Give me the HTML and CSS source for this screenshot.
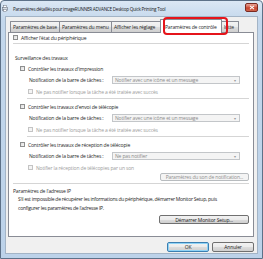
FILE: index.html
```html
<!DOCTYPE html>
<html lang="fr">
<head>
    <meta charset="UTF-8">
    <title>Paramètres détaillés</title>
    <link rel="stylesheet" href="styles.css">
</head>
<body>
    <div class="window">
        <div class="titlebar">
            <svg class="app-icon" viewBox="0 0 6 7">
                <rect x="0.5" y="2.5" width="5" height="3" fill="#d8dde3" stroke="#6b7380" stroke-width="0.6"/>
                <rect x="1.5" y="0.5" width="3" height="2" fill="#fff" stroke="#6b7380" stroke-width="0.5"/>
                <rect x="1.5" y="4.5" width="3" height="2" fill="#fff" stroke="#6b7380" stroke-width="0.5"/>
            </svg>
            <div class="title-text">Paramètres détaillés pour imageRUNNER ADVANCE Desktop Quick Printing Tool</div>
            <div class="close-btn">
                <svg viewBox="0 0 6 5"><path d="M1 0.8 L5 4.2 M5 0.8 L1 4.2" stroke="#fff" stroke-width="1.1"/></svg>
            </div>
        </div>
        <div class="client">
            <div class="tabs">
                <div class="tab">Paramètres de base</div>
                <div class="tab">Paramètres du menu</div>
                <div class="tab">Afficher les réglage</div>
                <div class="tab selected">Paramètres de contrôle</div>
                <div class="tab last">lutte</div>
                <div class="highlight"></div>
            </div>
            <div class="panel">
                <div class="row top-row"><span class="check"></span>Afficher l'état du périphérique</div>
                <div class="rule wide"></div>
                <div class="row section-title">Surveillance des travaux</div>

                <div class="group">
                    <div class="row job-row"><span class="check"></span>Contrôler les travaux d'impression</div>
                    <div class="notif-row">
                        <span class="notif-label">Notification de la barre de tâches :</span>
                        <div class="combo">Notifier avec une icône et un message<span class="combo-arrow">▾</span></div>
                    </div>
                    <div class="row sub-row disabled"><span class="check"></span>Ne pas notifier lorsque la tâche a été traitée avec succès</div>
                    <div class="rule"></div>

                    <div class="row job-row"><span class="check"></span>Contrôler les travaux d'envoi de télécopie</div>
                    <div class="notif-row">
                        <span class="notif-label">Notification de la barre de tâches :</span>
                        <div class="combo">Notifier avec une icône et un message<span class="combo-arrow">▾</span></div>
                    </div>
                    <div class="row sub-row disabled"><span class="check"></span>Ne pas notifier lorsque la tâche a été traitée avec succès</div>
                    <div class="rule"></div>

                    <div class="row job-row"><span class="check"></span>Contrôler les travaux de réception de télécopie</div>
                    <div class="notif-row">
                        <span class="notif-label">Notification de la barre de tâches :</span>
                        <div class="combo">Ne pas notifier<span class="combo-arrow">▾</span></div>
                    </div>
                    <div class="row sub-row disabled"><span class="check"></span>Notifier la réception de télécopies par un son</div>
                    <div class="btn-row first-btn">
                        <div class="btn disabled-btn">Paramètres du son de notification...</div>
                    </div>
                </div>

                <div class="rule wide last-rule"></div>
                <div class="row ip-title">Paramètres de l'adresse IP</div>
                <div class="ip-text">S'il est impossible de récupérer les informations du périphérique, démarrer Monitor Setup, puis<br>configurer les paramètres de l'adresse IP.</div>
                <div class="btn-row setup-btn-row">
                    <div class="btn setup-btn">Démarrer Monitor Setup...</div>
                </div>
            </div>
            <div class="dialog-buttons">
                <div class="btn ok-btn">OK</div>
                <div class="btn cancel-btn">Annuler</div>
            </div>
        </div>
    </div>
</body>
</html>
```

FILE: styles.css
```css
html, body {
    margin: 0;
    padding: 0;
    background: #ffffff;
}
body {
    font-family: "Open Sans", "Noto Sans", sans-serif;
    font-size: 5px;
    letter-spacing: -0.15px;
    color: #1e1e1e;
}
.window {
    width: 263px;
    height: 259px;
    box-sizing: border-box;
    border: 1px solid #5d7188;
    border-radius: 4px 4px 0 0;
    background: linear-gradient(#dbe7f4, #c3d7ec 20px, #bcd2e9);
    display: flex;
    flex-direction: column;
}
.titlebar {
    height: 15px;
    display: flex;
    align-items: center;
    padding-left: 1px;
}
.app-icon {
    width: 6px;
    height: 7px;
    margin-right: 5px;
}
.title-text {
    flex-grow: 1;
    font-size: 4.6px;
    letter-spacing: -0.25px;
    color: #1b1b1b;
    white-space: nowrap;
}
.close-btn {
    width: 13px;
    height: 9px;
    margin-right: 4px;
    margin-bottom: 2px;
    box-sizing: border-box;
    border: 1px solid #7a2a22;
    border-radius: 2px;
    background: linear-gradient(#e8a193, #d2614f 45%, #c7412b 55%, #d0664f);
    display: flex;
    justify-content: center;
    align-items: center;
}
.close-btn svg {
    width: 6px;
    height: 5px;
}
.client {
    flex-grow: 1;
    margin: 0 4px 4px 4px;
    background: #f0f0f0;
    border: 1px solid #a3b4c6;
    padding: 2px 3px 0 2px;
    display: flex;
    flex-direction: column;
}
.tabs {
    display: flex;
    align-items: flex-end;
    height: 13px;
    padding-left: 2px;
    position: relative;
    z-index: 1;
}
.tab {
    height: 11px;
    box-sizing: border-box;
    border: 1px solid #898c95;
    border-bottom: none;
    margin-right: -1px;
    background: linear-gradient(#f3f3f3, #ebebeb 50%, #dddddd 51%, #cfcfcf);
    padding: 0 2px;
    display: flex;
    align-items: center;
    white-space: nowrap;
    overflow: hidden;
    border-radius: 1px 1px 0 0;
}
.tab:nth-child(1) { width: 50px; }
.tab:nth-child(2) { width: 53px; }
.tab:nth-child(3) { width: 51px; }
.tab.selected {
    width: 62px;
    height: 14px;
    margin-bottom: -1px;
    background: #ffffff;
    padding-left: 4px;
    margin-left: -1px;
    margin-right: -2px;
    position: relative;
}
.tab.last {
    width: 19px;
    padding-left: 3px;
}
.highlight {
    position: absolute;
    left: 155px;
    top: -2px;
    width: 61px;
    height: 14px;
    border: 2px solid #e5141b;
    border-radius: 4px;
}
.panel {
    height: 205px;
    box-sizing: border-box;
    background: #ffffff;
    border: 1px solid #898c95;
    padding: 0 4px 0 4px;
    display: flex;
    flex-direction: column;
}
.row {
    display: flex;
    align-items: center;
    height: 7px;
    white-space: nowrap;
}
.check {
    width: 5px;
    height: 5px;
    box-sizing: border-box;
    border: 1px solid #8e8f8f;
    background: linear-gradient(135deg, #dcdcdc, #f6f6f6);
    margin-right: 3px;
    flex-shrink: 0;
}
.top-row {
    margin-top: 1px;
}
.rule {
    height: 1px;
    background: #d5d5d5;
    margin-top: 3px;
    margin-left: 7px;
}
.rule.wide {
    margin-left: 0;
    margin-top: 2px;
}
.section-title {
    margin-top: 10px;
    margin-left: 2px;
}
.group {
    display: flex;
    flex-direction: column;
    padding-left: 7px;
}
.job-row {
    margin-top: 4px;
}
.notif-row {
    display: flex;
    align-items: center;
    height: 8px;
    margin-top: 4px;
    padding-left: 9px;
    white-space: nowrap;
}
.notif-label {
    width: 83px;
    flex-shrink: 0;
}
.combo {
    width: 128px;
    height: 8px;
    box-sizing: border-box;
    border: 1px solid #c3c6c9;
    background: #f4f4f4;
    color: #8a8a8a;
    padding-left: 2px;
    display: flex;
    align-items: center;
}
.combo-arrow {
    margin-left: auto;
    margin-right: 3px;
    font-size: 4px;
    color: #9a9a9a;
}
.sub-row {
    margin-top: 4px;
    padding-left: 8px;
}
.disabled {
    color: #9c9c9c;
}
.disabled .check {
    border-color: #c4c4c4;
    background: #f4f4f4;
}
.btn-row {
    display: flex;
    justify-content: flex-end;
}
.first-btn {
    margin-top: 2px;
}
.btn {
    height: 9px;
    box-sizing: border-box;
    border: 1px solid #707070;
    border-radius: 2px;
    background: linear-gradient(#f2f2f2, #ebebeb 50%, #dddddd 51%, #cfcfcf);
    display: flex;
    align-items: center;
    justify-content: center;
    white-space: nowrap;
}
.disabled-btn {
    width: 89px;
    height: 8px;
    border-color: #b8bcbf;
    background: #f4f4f4;
    color: #8f8f8f;
}
.last-rule {
    margin-top: 6px;
}
.ip-title {
    margin-top: 3px;
}
.ip-text {
    margin-top: 1px;
    padding-left: 5px;
    line-height: 9px;
    white-space: nowrap;
    letter-spacing: -0.25px;
}
.setup-btn-row {
    margin-top: 2px;
}
.setup-btn {
    width: 90px;
}
.dialog-buttons {
    display: flex;
    justify-content: flex-end;
    gap: 3px;
    margin-top: 5px;
}
.ok-btn, .cancel-btn {
    width: 42px;
    height: 10px;
}
.ok-btn {
    border-color: #3c7fb1;
    box-shadow: inset 0 0 0 1px #8fd3f6;
}
```
